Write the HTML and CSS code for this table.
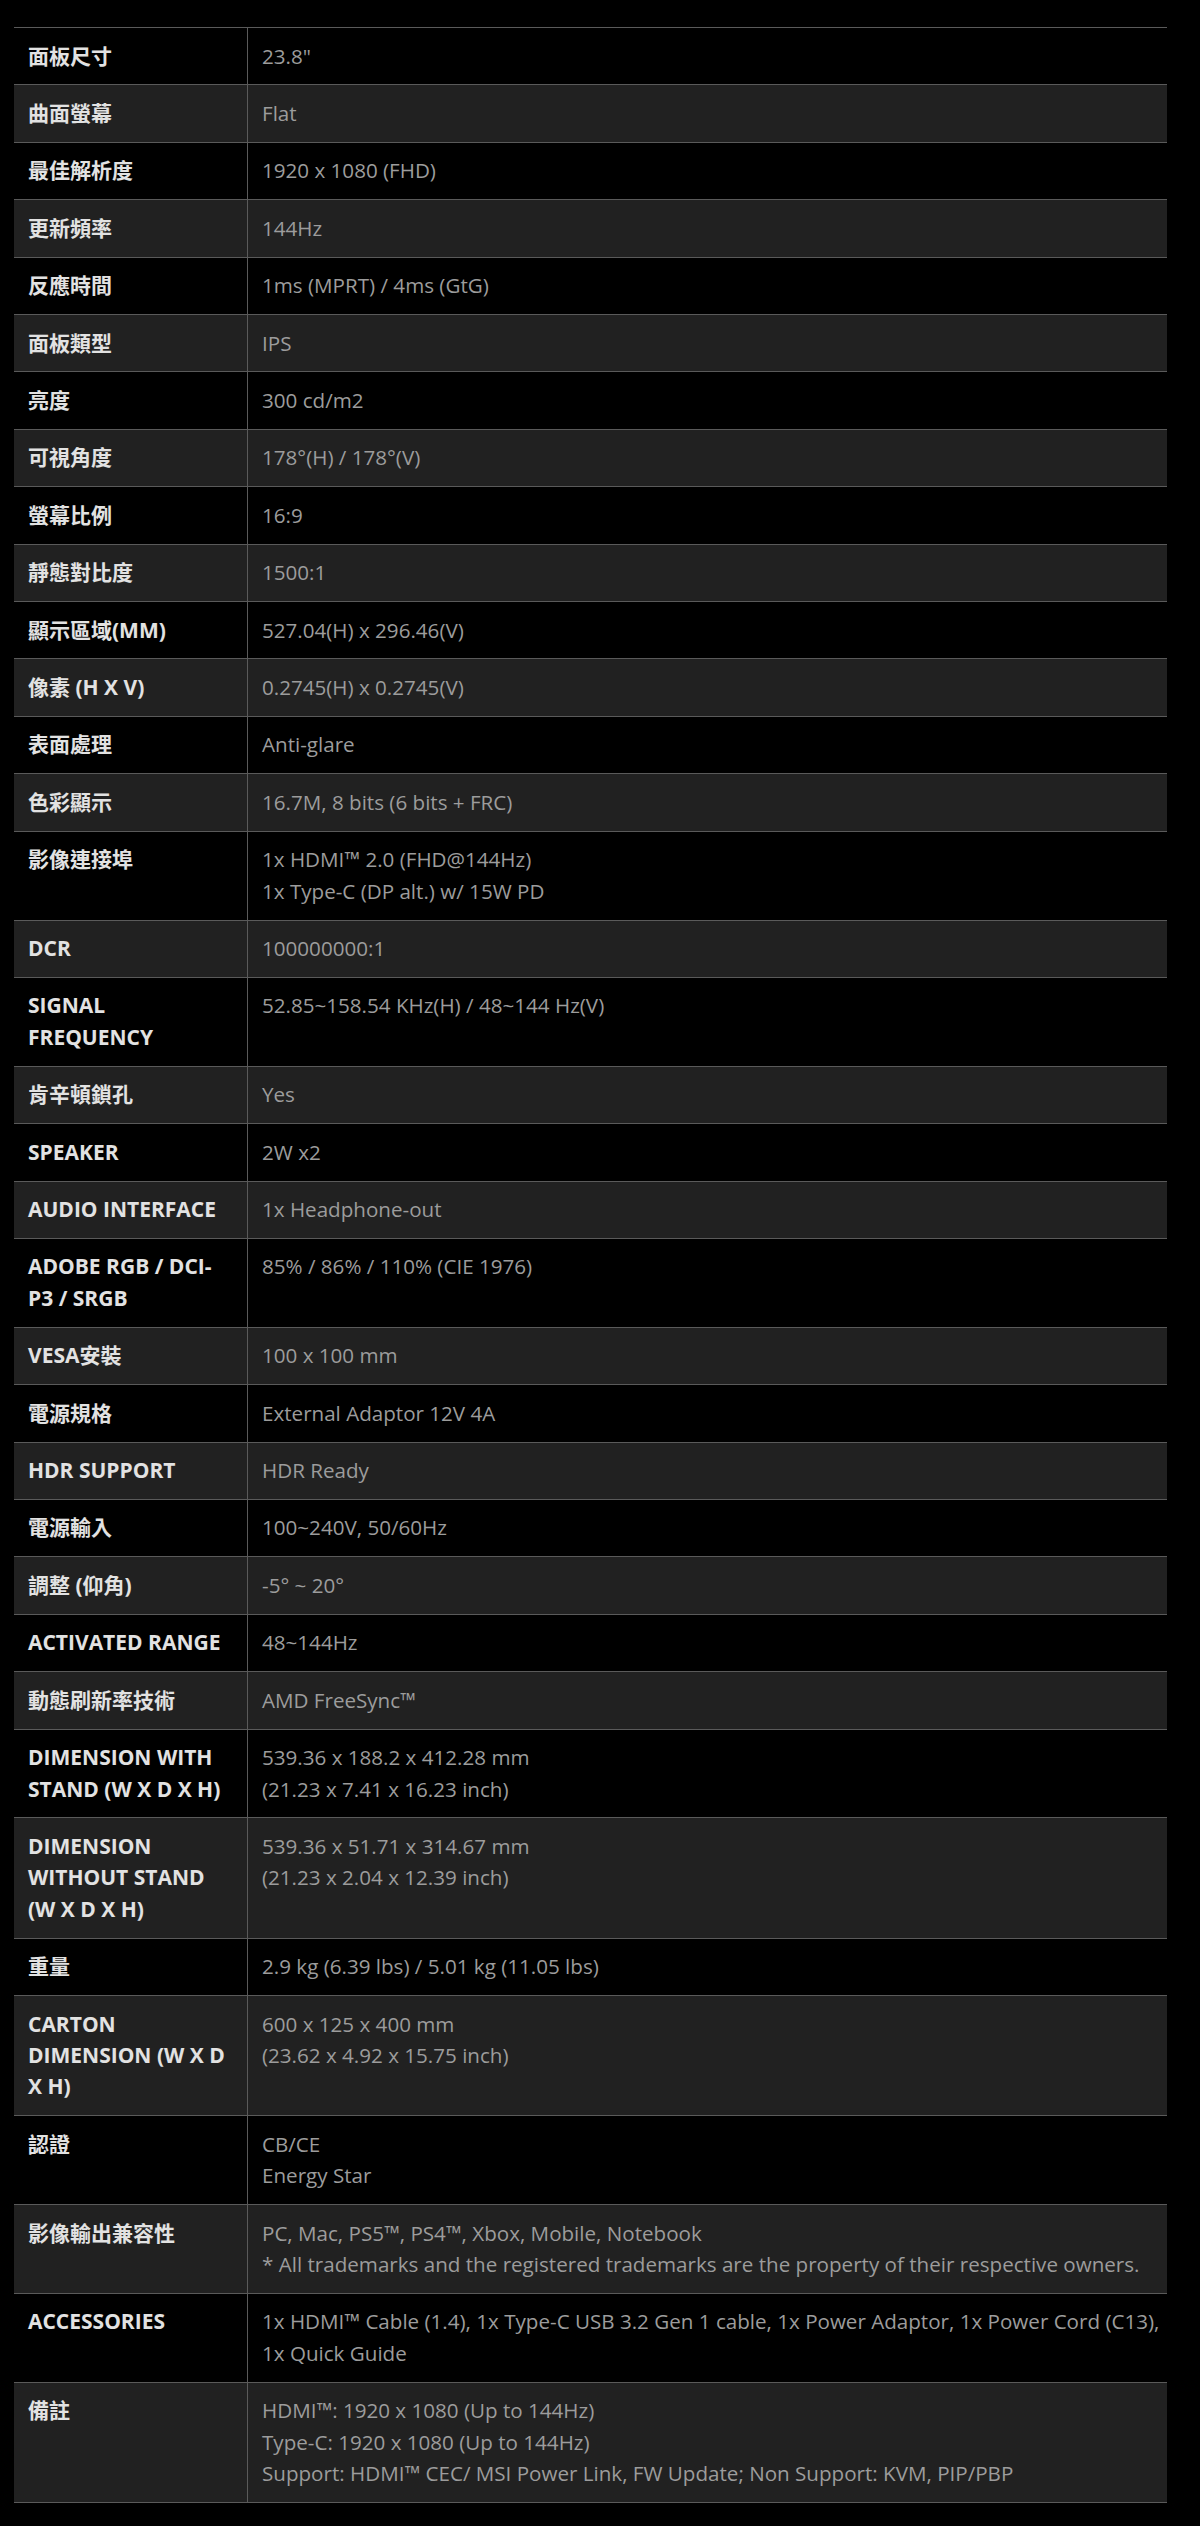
FILE: index.html
```html
<!DOCTYPE html>
<html lang="zh-Hant">
<head>
<meta charset="utf-8">
<title>規格</title>
<link rel="stylesheet" href="styles.css">
</head>
<body>
<main class="specs">
<table class="spec-table">
<tbody>
<tr><th>面板尺寸</th><td>23.8"</td></tr>
<tr><th>曲面螢幕</th><td>Flat</td></tr>
<tr><th>最佳解析度</th><td>1920 x 1080 (FHD)</td></tr>
<tr><th>更新頻率</th><td>144Hz</td></tr>
<tr><th>反應時間</th><td>1ms (MPRT) / 4ms (GtG)</td></tr>
<tr><th>面板類型</th><td>IPS</td></tr>
<tr><th>亮度</th><td>300 cd/m2</td></tr>
<tr><th>可視角度</th><td>178°(H) / 178°(V)</td></tr>
<tr><th>螢幕比例</th><td>16:9</td></tr>
<tr><th>靜態對比度</th><td>1500:1</td></tr>
<tr><th>顯示區域(MM)</th><td>527.04(H) x 296.46(V)</td></tr>
<tr><th>像素 (H X V)</th><td>0.2745(H) x 0.2745(V)</td></tr>
<tr><th>表面處理</th><td>Anti-glare</td></tr>
<tr><th>色彩顯示</th><td>16.7M, 8 bits (6 bits + FRC)</td></tr>
<tr><th>影像連接埠</th><td>1x HDMI™ 2.0 (FHD@144Hz)<br>1x Type-C (DP alt.) w/ 15W PD</td></tr>
<tr><th>DCR</th><td>100000000:1</td></tr>
<tr><th>SIGNAL FREQUENCY</th><td>52.85~158.54 KHz(H) / 48~144 Hz(V)</td></tr>
<tr><th>肯辛頓鎖孔</th><td>Yes</td></tr>
<tr><th>SPEAKER</th><td>2W x2</td></tr>
<tr><th>AUDIO INTERFACE</th><td>1x Headphone-out</td></tr>
<tr><th>ADOBE RGB / DCI-P3 / SRGB</th><td>85% / 86% / 110% (CIE 1976)</td></tr>
<tr><th>VESA安裝</th><td>100 x 100 mm</td></tr>
<tr><th>電源規格</th><td>External Adaptor 12V 4A</td></tr>
<tr><th>HDR SUPPORT</th><td>HDR Ready</td></tr>
<tr><th>電源輸入</th><td>100~240V, 50/60Hz</td></tr>
<tr><th>調整 (仰角)</th><td>-5° ~ 20°</td></tr>
<tr><th>ACTIVATED RANGE</th><td>48~144Hz</td></tr>
<tr><th>動態刷新率技術</th><td>AMD FreeSync™</td></tr>
<tr><th>DIMENSION WITH STAND (W X D X H)</th><td>539.36 x 188.2 x 412.28 mm<br>(21.23 x 7.41 x 16.23 inch)</td></tr>
<tr><th>DIMENSION WITHOUT STAND (W X D X H)</th><td>539.36 x 51.71 x 314.67 mm<br>(21.23 x 2.04 x 12.39 inch)</td></tr>
<tr><th>重量</th><td>2.9 kg (6.39 lbs) / 5.01 kg (11.05 lbs)</td></tr>
<tr><th>CARTON DIMENSION (W X D X H)</th><td>600 x 125 x 400 mm<br>(23.62 x 4.92 x 15.75 inch)</td></tr>
<tr><th>認證</th><td>CB/CE<br>Energy Star</td></tr>
<tr><th>影像輸出兼容性</th><td>PC, Mac, PS5™, PS4™, Xbox, Mobile, Notebook<br>* All trademarks and the registered trademarks are the property of their respective owners.</td></tr>
<tr><th>ACCESSORIES</th><td>1x HDMI™ Cable (1.4), 1x Type-C USB 3.2 Gen 1 cable, 1x Power Adaptor, 1x Power Cord (C13),<br>1x Quick Guide</td></tr>
<tr><th>備註</th><td>HDMI™: 1920 x 1080 (Up to 144Hz)<br>Type-C: 1920 x 1080 (Up to 144Hz)<br>Support: HDMI™ CEC/ MSI Power Link, FW Update; Non Support: KVM, PIP/PBP</td></tr>
</tbody>
</table>
</main>
</body>
</html>
```
FILE: styles.css
```css
html, body {
  margin: 0;
  padding: 0;
  background: #000;
}

.specs {
  padding: 27px 0 25px 14px;
}

.spec-table {
  width: 1153px;
  table-layout: fixed;
  border-collapse: collapse;
  border-top: 1px solid #5a5a5a;
  font-family: "Open Sans", "Noto Sans CJK TC", sans-serif;
  line-height: 31.4px;
}

.spec-table tr {
  border-bottom: 1px solid #5a5a5a;
}

.spec-table tr:nth-child(even) {
  background: #212121;
}

.spec-table th,
.spec-table td {
  padding: 12.5px 14px;
  vertical-align: top;
  text-align: left;
}

.spec-table th {
  width: 205px;
  border-right: 1px solid #5a5a5a;
  color: #e2e2e2;
  font-size: 21px;
  font-weight: 700;
}

.spec-table td {
  color: #9c9c9c;
  font-size: 20.6px;
  font-weight: 400;
  padding-right: 0;
}
```
